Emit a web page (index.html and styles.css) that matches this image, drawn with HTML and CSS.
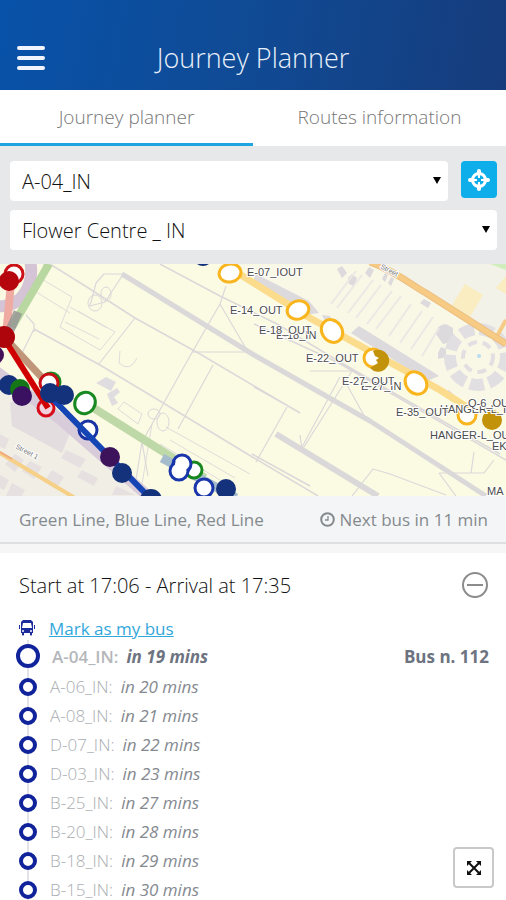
FILE: index.html
```html
<!DOCTYPE html>
<html lang="en">
<head>
  <meta charset="utf-8">
  <meta name="viewport" content="width=device-width, initial-scale=1">
  <title>Journey Planner</title>
  <link rel="stylesheet" href="styles.css">
</head>
<body>
  <header class="header">
    <button class="menu-btn" aria-label="Menu"><span></span><span></span><span></span></button>
    <h1>Journey Planner</h1>
  </header>

  <nav class="tabs">
    <a href="#planner" class="tab active">Journey planner</a>
    <a href="#routes" class="tab">Routes information</a>
  </nav>

  <form class="search" id="planner">
    <div class="search-row">
      <div class="select-box">
        <select aria-label="From"><option>A-04_IN</option></select>
      </div>
      <button type="button" class="locate-btn" aria-label="Use my location">
        <svg width="22" height="22" viewBox="0 0 22 22">
          <circle cx="11" cy="11" r="6.500" fill="none" stroke="#fff" stroke-width="3"/>
          <path d="M11 2v3M11 17v3M2 11h3M17 11h3" stroke="#fff" stroke-width="4" stroke-linecap="round"/>
          <path d="M11 5v4M11 13v4M5 11h4M13 11h4" stroke="#fff" stroke-width="2"/>
        </svg>
      </button>
    </div>
    <div class="select-box">
      <select aria-label="To"><option>Flower Centre _ IN</option></select>
    </div>
  </form>

  <svg class="map" viewBox="0 0 506 232" role="img" aria-label="Map of bus lines">
    <rect width="506" height="232" fill="#fbfae3"/>

    <!-- city blocks, top right and bottom left -->
    <path d="M238 0H506V150L440 125L330 62Z" fill="#f9f7e6"/>
    <path d="M376 0H506V84Z" fill="#f3f2e9"/>
    <path d="M465 20l18 11-13 22-18-12zM506 12v18l-10-6z" fill="#fbedc2"/>
    <path d="M490 0h16v6z" fill="#cfeebb"/>
    <path d="M0 116L150 232H0Z" fill="#f1eee6"/>
    <path d="M10 139l22-14 42 34-12 30-50-27z" fill="#e3dde0"/>
    <path d="M96 119l10-6 10 5-5 9zM107 130l10-6 3 4-6 5 4 6-6 3z" fill="#dfdde0"/>
    <g fill="#e6e1e0">
      <path d="M5 200l10-10 9 6-9 12zM22 207l8-10 12 6-8 12zM44 218l8-12 12 7-8 12zM66 186l20 9-6 9-19-10zM82 206l16 8-4 8-17-9zM116 222l20 9H112z"/>
      <path d="M0 211l9 5-5 10-4-2zM12 219l13 7-3 6H6zM0 170l9 5-4 10-5-2z"/>
    </g>

    <!-- terminal buildings along the road -->
    <g fill="#dddadd">
      <path d="M254 9l55 28 10 12-14 2-51-28zM351 69l8-7 74 46 6 4-12 5z"/>
      <path d="M337 5l5-3 5 7-5 5zM348 14l4-4 5 4-3 8-5-2zM365 9l4-6 5 3-4 8zM382 15l3-6 3 2-3 7zM388 19l3-6 3 2-3 7zM420 39l4-4 7 4-3 5zM322 51l8 1 4 8-8-1zM444 129l5-3 5 5-4 3z"/>
      <path d="M436 70q0-9 10-10l7 4v8q-3 7-10 8zM438 89l3-6 5 2v8l-8 2z"/>
    </g>
    <path d="M331 40l25-33M337 44l25-33M348 49l25-33M356 54l25-33M367 60l25-33M376 65l25-33M389 72l22-32M400 79l22-32M411 85l22-32M422 92l17-28" stroke="#ebe8e5" stroke-width="2"/>
    <g fill="none" stroke="#e2dfe2">
      <circle cx="478" cy="93" r="28" stroke-width="12" stroke-dasharray="14 5"/>
      <circle cx="478" cy="93" r="15" stroke-width="4" stroke-dasharray="9 6"/>
    </g>
    <circle cx="479" cy="92" r="2" fill="#b8dcf0"/>

    <!-- runways and taxiways -->
    <g fill="none" stroke="#dbd8d9" stroke-linejoin="round">
      <path d="M122 10L254 91L370 157L486 232" stroke-width="5"/>
      <path d="M276 170L378 232" stroke-width="6"/>
      <path d="M160 0L220 32L277 60L340 98L500 190M50 0L90 25L135 54L200 90L300 149M34 65L100 101L160 137L254 194L318 232M254 60L337 98L506 196M252 190L310 222M254 123L290 143" stroke-width="1.5"/>
      <path d="M122 10H104L96 19L90 42L105 38L122 12M220 40L190 92L142 178L134 228M220 40L226 22M220 40L248 88H192M213 101L178 165M135 54L98 101M34 65L22 89M26 51L34 60V68M142 178L148 212M287 143L256 198M300 171L302 186L352 107H310M340 113L302 183M342 112L366 155M373 205L352 232M373 205L390 210L446 231M439 209H484L494 196M439 209L456 232M471 209L474 188" stroke-width="1.2"/>
      <path d="M44 0L40 14L72 33L60 63L100 86L115 68L78 47M40 14L30 24L70 49M65 58L99 75M70 43L107 64M120 87L119 99Q130 109 137 94M118 145l6-7 18 12-4 10zM152 160L140 232M166 163L250 210M160 180l70 42M170 176l65 38" stroke-width=".9"/>
      <ellipse cx="95" cy="39" rx="7" ry="8"/><ellipse cx="106" cy="30" rx="5" ry="7"/>
      <ellipse cx="163" cy="158" rx="6" ry="9"/><ellipse cx="154" cy="150" rx="6" ry="5"/>
    </g>

    <!-- main roads -->
    <path d="M496 74L506 56" stroke="#f6cb85" stroke-width="4"/>
    <path d="M370 -2C395 7 410 20 426 29L506 80" fill="none" stroke="#eabf80" stroke-width="7"/>
    <path d="M370 -2C395 7 410 20 426 29L506 80" fill="none" stroke="#f8cb85" stroke-width="5"/>
    <path d="M-2 188L75 234" stroke="#f6d087" stroke-width="4"/>
    <path d="M0 188L12 195" stroke="#f0aa80" stroke-width="2"/>
    <path d="M228 3L310 54L440 126L478 150" fill="none" stroke="#fbdc8d" stroke-width="7"/>

    <!-- faded route lines -->
    <path d="M-3 42C22 45 35 20 30 -4" fill="none" stroke="#d5c3d6" stroke-width="12"/>
    <path d="M-3 108L60 155L148 232" fill="none" stroke="#d8cbda" stroke-width="11"/>
    <path d="M49 0L12 63" stroke="#b9d7a1" stroke-width="8"/>
    <path d="M12 8L6 72" stroke="#efaaa2" stroke-width="8"/>
    <path d="M18 48L10 66" stroke="#949494" stroke-width="9" opacity=".8"/>
    <path d="M5 74L48 120" stroke="#c0967a" stroke-width="7"/>
    <path d="M84 138L205 214" stroke="#bed8a8" stroke-width="8"/>
    <path d="M162 194L236 234" stroke="#a4bccb" stroke-width="9"/>

    <!-- hollow stops -->
    <g fill="#fff" stroke-width="3">
      <circle cx="14" cy="10" r="9" stroke="#cb1018"/>
      <circle cx="51" cy="118" r="9" stroke="#168a21"/>
      <circle cx="49" cy="119" r="9" stroke="#c80d15"/>
      <circle cx="46" cy="144" r="8" fill="#f1d1db" stroke="#d80b1b"/>
      <ellipse cx="85" cy="139" rx="10" ry="11" transform="rotate(35 85 139)" stroke="#188920"/>
      <circle cx="88" cy="166" r="9" stroke="#1733a4"/>
      <circle cx="194" cy="206" r="8" stroke="#16871f"/>
      <circle cx="182" cy="200" r="9" stroke="#1936aa"/>
      <circle cx="179" cy="207" r="9" stroke="#1936aa"/>
      <circle cx="182" cy="200" r="7"/>
      <circle cx="204" cy="224" r="9" stroke="#1936aa"/>
    </g>

    <!-- blue and red lines -->
    <path d="M47 129L148 232" stroke="#1544b4" stroke-width="6"/>
    <path d="M3 73L48 144" stroke="#d10000" stroke-width="6"/>

    <circle cx="9" cy="17" r="10" fill="#b6070e"/>
    <circle cx="4" cy="73" r="11" fill="#ad050b"/>
    <circle cx="-5" cy="91" r="9" fill="#44115b"/>
    <circle cx="9" cy="121" r="10" fill="#14327b"/>
    <circle cx="20" cy="125" r="10" fill="#157617"/>
    <circle cx="22" cy="132" r="10" fill="#3a1160"/>
    <g fill="#14327b">
      <circle cx="50" cy="129" r="10"/><circle cx="64" cy="131" r="10"/>
      <circle cx="122" cy="209" r="10"/><circle cx="151" cy="236" r="11"/>
      <circle cx="226" cy="225" r="10"/><circle cx="203" cy="-8" r="10"/>
    </g>
    <circle cx="110" cy="193" r="10" fill="#3d135c"/>

    <g fill="#fff" stroke="#f8b51d" stroke-width="3">
      <ellipse cx="230" cy="9" rx="11" ry="9" transform="rotate(-12 230 9)"/>
      <ellipse cx="298" cy="46" rx="11" ry="9" transform="rotate(-18 298 46)"/>
      <ellipse cx="332" cy="67" rx="10" ry="12" transform="rotate(-35 332 67)"/>
      <circle cx="373" cy="94" r="9"/>
      <ellipse cx="416" cy="119" rx="10" ry="12" transform="rotate(-40 416 119)"/>
      <circle cx="467" cy="151" r="9"/>
    </g>
    <path d="M373 87a11 11 0 1 1-3 17l8-5-2-3 3-2-4-2z" fill="#c2920a"/>
    <circle cx="492" cy="156" r="10" fill="#c2920a"/>

    <g class="map-labels">
      <text x="247" y="12">E-07_IOUT</text>
      <text x="230" y="50">E-14_OUT</text>
      <text x="276" y="75">E-18_IN</text>
      <text x="259" y="70">E-18_OUT</text>
      <text x="306" y="98">E-22_OUT</text>
      <text x="361" y="126">E-27_IN</text>
      <text x="342" y="121">E-27_OUT</text>
      <text x="440" y="149">HANGER-L_IN</text>
      <text x="396" y="152">E-35_OUT</text>
      <text x="468" y="143">Q-6_OUT</text>
      <text x="430" y="175">HANGER-L_OUT</text>
      <text x="492" y="186">EK</text>
      <text x="487" y="231">MA</text>
      <text class="street" x="380" y="4" transform="rotate(28 380 4)">Street</text>
      <text class="street" x="15" y="184" transform="rotate(28 15 184)">Street 1</text>
    </g>
  </svg>

  <div class="summary">
    <span>Green Line, Blue Line, Red Line</span>
    <span class="next-bus">
      <svg width="15" height="15" viewBox="0 0 15 15" fill="none" stroke="#858a8e">
        <circle cx="7.500" cy="7.500" r="6.300" stroke-width="2"/>
        <path d="M8 4v4H5" stroke-width="1.300"/>
      </svg>
      Next bus in 11 min
    </span>
  </div>

  <main class="journey">
    <div class="journey-head">
      <h2>Start at 17:06 - Arrival at 17:35</h2>
      <button class="collapse-btn" aria-label="Collapse">
        <svg width="28" height="28" viewBox="0 0 28 28" fill="none" stroke="#8c8c8c" stroke-width="2">
          <circle cx="14" cy="14" r="12"/><path d="M6 14h16"/>
        </svg>
      </button>
    </div>

    <div class="mark">
      <svg width="16" height="16" viewBox="0 0 16 16" fill="#1c2b9b">
        <path d="M4 0h8l2 2v11h-1v2q-1 1-2 0v-2H5v2q-1 1-2 0v-2H2V2z"/>
        <path d="M0 5h1v4H0zM15 5h1v4h-1z"/>
        <path d="M4 3h8l1 5H3z" fill="#fff"/>
        <circle cx="4" cy="11" r="1" fill="#fff"/><circle cx="12" cy="11" r="1" fill="#fff"/>
      </svg>
      <a href="#mark">Mark as my bus</a>
    </div>

    <ol class="stops">
      <li class="current"><span>A-04_IN:</span><em>in 19 mins</em><strong>Bus n. 112</strong></li>
      <li><span>A-06_IN:</span><em>in 20 mins</em></li>
      <li><span>A-08_IN:</span><em>in 21 mins</em></li>
      <li><span>D-07_IN:</span><em>in 22 mins</em></li>
      <li><span>D-03_IN:</span><em>in 23 mins</em></li>
      <li><span>B-25_IN:</span><em>in 27 mins</em></li>
      <li><span>B-20_IN:</span><em>in 28 mins</em></li>
      <li><span>B-18_IN:</span><em>in 29 mins</em></li>
      <li><span>B-15_IN:</span><em>in 30 mins</em></li>
    </ol>
  </main>

  <button class="expand-btn" aria-label="Expand">
    <svg width="14" height="14" viewBox="0 0 14 14">
      <path d="M2 2l10 10M12 2L2 12" stroke="#111" stroke-width="2"/>
      <path d="M0 0h5L0 5zM14 0v5L9 0zM0 14V9l5 5zM14 14H9l5-5z" fill="#111"/>
    </svg>
  </button>
</body>
</html>
```
FILE: styles.css
```css
*,
*::before,
*::after {
  box-sizing: border-box;
}

body {
  display: flex;
  flex-direction: column;
  height: 100vh;
  margin: 0;
  overflow: hidden;
  background-color: #fff;
  font-family: "Open Sans", "Noto Sans", sans-serif;
}

button {
  padding: 0;
  border: none;
  background: none;
  cursor: pointer;
}

svg {
  display: block;
  flex-shrink: 0;
}

.header {
  display: grid;
  grid-template-columns: 28px 1fr 28px;
  align-items: center;
  padding: 25px 17px 0;
  height: 90px;
  flex-shrink: 0;
  background: linear-gradient(100deg, #0852a9, #104a94 50%, #163c7c);
}

.header h1 {
  margin: 0;
  text-align: center;
  color: #e9f0fb;
  font-size: 27px;
  font-weight: 300;
}

.menu-btn {
  display: flex;
  flex-direction: column;
  gap: 6px;
}

.menu-btn span {
  width: 28px;
  height: 4px;
  border-radius: 2px;
  background-color: #f1f4fc;
}

.tabs {
  display: flex;
  flex-shrink: 0;
}

.tab {
  flex: 1;
  height: 56px;
  line-height: 55px;
  border-bottom: 3px solid #fff;
  text-align: center;
  text-decoration: none;
  color: #777;
  font-size: 19px;
  font-weight: 300;
}

.tab.active {
  border-bottom-color: #20a4df;
}

.search {
  display: flex;
  flex-direction: column;
  gap: 9px;
  padding: 15px 9px 14px 10px;
  background-color: #e6e8ea;
}

.search-row {
  display: flex;
  gap: 13px;
}

.select-box {
  position: relative;
  flex: 1;
}

.select-box::after {
  content: "";
  position: absolute;
  top: 16px;
  right: 7px;
  border: 4px solid transparent;
  border-top: 7px solid #000;
  border-bottom: none;
  pointer-events: none;
}

.select-box select {
  display: block;
  width: 100%;
  height: 40px;
  padding: 0 12px;
  border: none;
  border-radius: 4px;
  appearance: none;
  background-color: #fff;
  color: #111;
  font-family: inherit;
  font-size: 20px;
  font-weight: 300;
}

.locate-btn {
  display: flex;
  align-items: center;
  justify-content: center;
  width: 36px;
  height: 37px;
  border-radius: 4px;
  background-color: #0daeea;
}

.map {
  width: 100%;
  height: auto;
}

.map-labels {
  font-family: "Liberation Sans", sans-serif;
  font-size: 11px;
  fill: #4b4b4b;
  stroke: #fff;
  stroke-width: 2px;
  paint-order: stroke;
}

.map-labels .street {
  font-size: 7px;
  fill: #777;
}

.summary {
  display: flex;
  justify-content: space-between;
  align-items: center;
  flex-shrink: 0;
  height: 48px;
  padding: 0 18px 0 19px;
  border-bottom: 2px solid #dedfe0;
  background-color: #f4f5f6;
  color: #858a8e;
  font-size: 17px;
}

.next-bus {
  display: flex;
  align-items: center;
  gap: 4px;
}

.journey {
  flex: 1;
  overflow: hidden;
  padding: 17px 17px 0 19px;
  border-top: 9px solid #f6f6f7;
}

.journey-head {
  display: flex;
  justify-content: space-between;
  align-items: center;
  height: 30px;
}

.journey-head h2 {
  margin: 0;
  color: #111;
  font-size: 20px;
  font-weight: 300;
}

.mark {
  display: flex;
  align-items: center;
  gap: 14px;
  height: 24px;
  margin-top: 16px;
}

.mark a {
  color: #32a7db;
  font-size: 17px;
}

.stops {
  margin: 0;
  padding: 0;
  list-style: none;
}

.stops li {
  position: relative;
  display: flex;
  align-items: center;
  gap: 8px;
  height: 29px;
  padding-left: 31px;
  color: #a9adb1;
  font-size: 17px;
  font-weight: 300;
}

/* line joining the stops */
.stops li::after {
  content: "";
  position: absolute;
  z-index: -1;
  left: 8px;
  top: 0;
  width: 2px;
  height: 100%;
  background-color: #e4e4e8;
}

.stops li::before {
  content: "";
  position: absolute;
  left: 0;
  width: 18px;
  height: 18px;
  border: 4px solid #10239b;
  border-radius: 50%;
  background-color: #fff;
}

.stops em {
  color: #858a90;
  font-weight: 400;
}

.stops .current {
  height: 32px;
  padding-left: 33px;
  font-weight: 600;
}

.stops .current::before {
  left: -3px;
  width: 24px;
  height: 24px;
}

.stops .current span {
  color: #b4b7ba;
}

.stops .current em,
.stops .current strong {
  color: #6d7380;
  font-weight: 700;
}

.stops strong {
  margin-left: auto;
}

.expand-btn {
  position: fixed;
  right: 12px;
  bottom: 12px;
  display: flex;
  align-items: center;
  justify-content: center;
  width: 41px;
  height: 41px;
  border: 2px solid #c9c9c9;
  border-radius: 4px;
  background-color: #fff;
}
```
